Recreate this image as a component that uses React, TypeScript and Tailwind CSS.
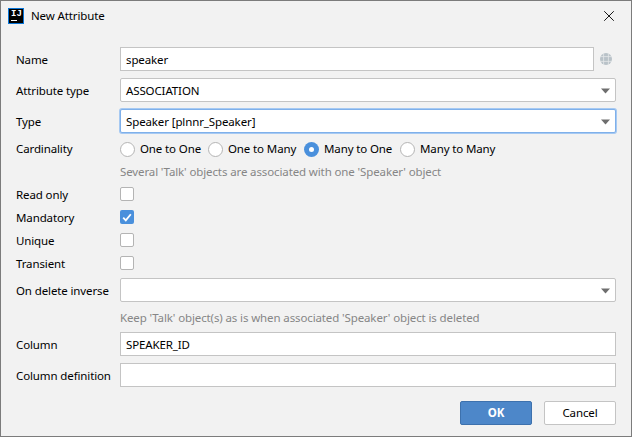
import { ReactNode } from 'react';
import { X } from 'lucide-react';

const font = { fontFamily: '"Noto Sans", "Open Sans", sans-serif' };

function Row({ label, className, flush, children }: { label?: string; className: string; flush?: boolean; children: ReactNode }) {
  return (
    <div className={`flex items-center ${className}`}>
      <div className={`w-[104px] shrink-0 whitespace-nowrap text-black ${flush ? '' : 'pt-[1px]'}`}>{label}</div>
      <div className="flex min-w-0 flex-1 items-center">{children}</div>
    </div>
  );
}

function TextField({ value }: { value?: string }) {
  return (
    <div className="flex h-6 flex-1 items-center border border-[#c4c4c4] bg-white px-[5px] pt-[1px] text-black">{value}</div>
  );
}

function Combo({ value, focused }: { value?: string; focused?: boolean }) {
  return (
    <div
      className={`flex h-6 flex-1 items-center justify-between rounded-[2px] border bg-white pl-[5px] pr-[5px] pt-[1px] text-black ${
        focused ? 'border-[#7fb0ea] shadow-[0_0_0_1px_#a6c9f2]' : 'border-[#c4c4c4]'
      }`}
    >
      <span>{value}</span>
      <svg width="9" height="6" viewBox="0 0 9 6">
        <path d="M0 0.5h9L4.5 5.5z" fill="#6e6e6e" />
      </svg>
    </div>
  );
}

function Radio({ label, checked, className }: { label: string; checked?: boolean; className: string }) {
  return (
    <div className={`flex items-center ${className}`}>
      {checked ? (
        <div className="flex h-[15px] w-[15px] items-center justify-center rounded-full bg-[#4a90dc]">
          <div className="h-[5px] w-[5px] rounded-full bg-white" />
        </div>
      ) : (
        <div className="h-[15px] w-[15px] rounded-full border border-[#b4b4b4] bg-white" />
      )}
      <span className="ml-[5px] whitespace-nowrap text-black">{label}</span>
    </div>
  );
}

function Check({ checked }: { checked?: boolean }) {
  if (checked) {
    return (
      <div className="flex h-[14px] w-[14px] items-center justify-center rounded-[2px] bg-[#4a90dc]">
        <svg width="10" height="9" viewBox="0 0 10 9">
          <path d="M1.2 4.6l2.6 2.8L8.8 1.2" fill="none" stroke="#fff" strokeWidth="1.8" />
        </svg>
      </div>
    );
  }
  return <div className="h-[14px] w-[14px] rounded-[2px] border border-[#b4b4b4] bg-white" />;
}

function AppIcon() {
  return (
    <div className="flex h-4 w-4 shrink-0 flex-col items-start border border-[#0a76d8] bg-black pl-[2px] pt-[1px]">
      <span className="text-[9px] font-bold leading-[9px] tracking-normal text-white" style={{ fontFamily: '"Liberation Mono", monospace' }}>
        IJ
      </span>
      <div className="mt-[1px] h-[1px] w-[6px] bg-white" />
    </div>
  );
}

function GlobeIcon() {
  return (
    <svg width="12" height="12" viewBox="0 0 12 12" className="ml-[6px] mr-[4px]">
      <circle cx="6" cy="6" r="6" fill="#b9c2c8" />
      <path d="M3.6 0v12M8.4 0v12M0 3.6h12M0 8.4h12" stroke="#e4e7e9" strokeWidth="0.8" />
    </svg>
  );
}

export default function App() {
  return (
    <div
      className="flex h-[437px] w-[632px] flex-col border border-[#7c7c7c] bg-[#f2f2f2] text-[11.5px] leading-4 tracking-[-0.12px]"
      style={font}
    >
      <div className="flex h-[30px] items-center pl-[7px] pr-[6px]">
        <AppIcon />
        <span className="ml-[7px] text-black">New Attribute</span>
        <X className="ml-auto mr-[7px] h-[18px] w-[18px] text-black" strokeWidth={1.2} />
      </div>

      <div className="flex flex-1 flex-col pl-[15px] pr-[15px]">
        <Row label="Name" className="mt-[16px] h-6">
          <TextField value="speaker" />
          <GlobeIcon />
        </Row>
        <Row label="Attribute type" className="mt-[7px] h-6">
          <Combo value="ASSOCIATION" />
        </Row>
        <Row label="Type" className="mt-[7px] h-6">
          <Combo value="Speaker [plnnr_Speaker]" focused />
        </Row>
        <Row label="Cardinality" className="mt-[8px] h-4" flush>
          <Radio label="One to One" className="w-[88px]" />
          <Radio label="One to Many" className="w-[96px]" />
          <Radio label="Many to One" className="w-[96px]" checked />
          <Radio label="Many to Many" className="w-[100px]" />
        </Row>
        <Row className="mt-[7px] h-4">
          <span className="whitespace-nowrap text-[#868686]">Several 'Talk' objects are associated with one 'Speaker' object</span>
        </Row>
        <Row label="Read only" className="mt-[6px] h-4">
          <Check />
        </Row>
        <Row label="Mandatory" className="mt-[7px] h-4">
          <Check checked />
        </Row>
        <Row label="Unique" className="mt-[7px] h-4">
          <Check />
        </Row>
        <Row label="Transient" className="mt-[7px] h-4">
          <Check />
        </Row>
        <Row label="On delete inverse" className="mt-[7px] h-6">
          <Combo />
        </Row>
        <Row className="mt-[8px] h-4">
          <span className="whitespace-nowrap text-[#868686]">Keep 'Talk' object(s) as is when associated 'Speaker' object is deleted</span>
        </Row>
        <Row label="Column" className="mt-[6px] h-6">
          <TextField value="SPEAKER_ID" />
        </Row>
        <Row label="Column definition" className="mt-[7px] h-6">
          <TextField />
        </Row>

        <div className="mt-[14px] flex justify-end gap-3">
          <button className="h-6 w-[72px] rounded-[2px] border border-[#3d71ad] bg-[#4d87c9] font-bold text-white">OK</button>
          <button className="h-6 w-[72px] rounded-[2px] border border-[#c4c4c4] bg-white text-black">Cancel</button>
        </div>
      </div>
    </div>
  );
}
